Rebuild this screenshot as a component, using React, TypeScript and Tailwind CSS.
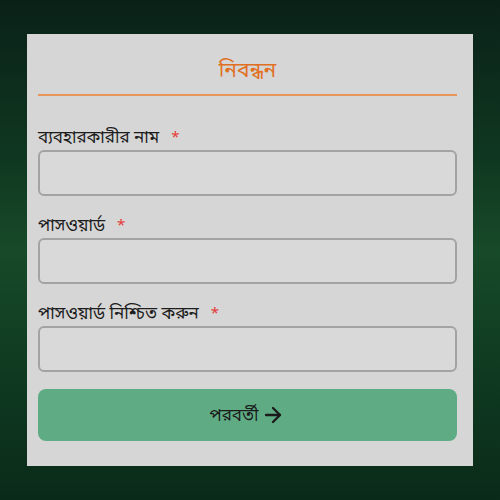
import React from "react";
import { ArrowRight } from "lucide-react";

function Field({ label }: { label: string }) {
  return (
    <div className="flex flex-col">
      <div className="h-[24px] flex items-center text-[17px] text-[#1c1c1c] leading-none">
        <span>{label}</span>
        <span className="ml-[12px] text-[#e53935] text-[15px]">*</span>
      </div>
      <div className="mt-[2px] h-[46px] rounded-[6px] border-2 border-[#a3a3a3] bg-[#d9d9d9]" />
    </div>
  );
}

export default function App() {
  return (
    <div
      className="w-[500px] h-[500px] flex justify-center pt-[34px] bg-[linear-gradient(180deg,#0a2118_0%,#0f3620_30%,#174a28_50%,#0f3a21_75%,#0a2a19_100%)]"
      style={{ fontFamily: '"Noto Sans", "Noto Sans Bengali", "Lohit Bengali", sans-serif' }}
    >
      <div className="w-[446px] h-[432px] bg-[#d6d6d6] pl-[11px] pr-[16px] flex flex-col">
        <div className="h-[62px] flex items-center justify-center border-b-2 border-[#e8955c] pt-[16px] pb-[4px]">
          <span className="text-[21px] text-[#e0701f]">নিবন্ধন</span>
        </div>
        <div className="mt-[28px] flex flex-col gap-[16px]">
          <Field label="ব্যবহারকারীর নাম" />
          <Field label="পাসওয়ার্ড" />
          <Field label="পাসওয়ার্ড নিশ্চিত করুন" />
        </div>
        <button className="mt-[17px] h-[52px] rounded-[8px] bg-[#5fac84] flex items-center justify-center gap-[3px] text-[17px] text-[#1a1a1a]">
          <span>পরবর্তী</span>
          <ArrowRight size={24} strokeWidth={2.3} />
        </button>
      </div>
    </div>
  );
}
